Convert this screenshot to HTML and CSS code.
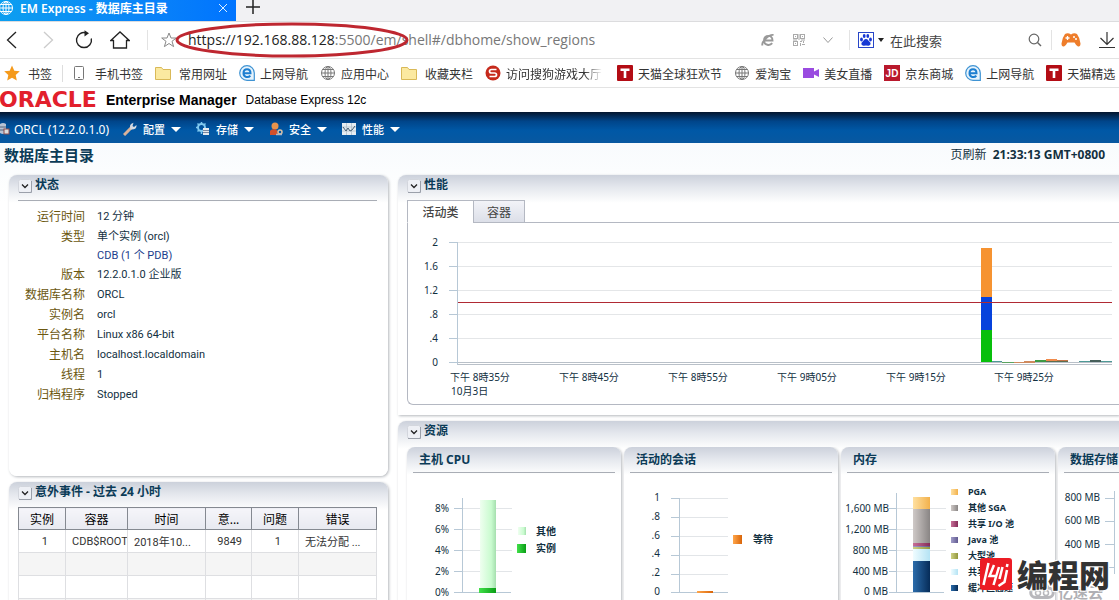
FILE: index.html
```html
<!DOCTYPE html>
<html lang="zh-CN">
<head>
<meta charset="utf-8">
<title>EM Express - 数据库主目录</title>
<link rel="stylesheet" href="styles.css">
</head>
<body>
<svg class="defs" width="0" height="0" aria-hidden="true">
  <defs>
    <symbol id="globe" viewBox="0 0 16 16"><g fill="none" stroke="currentColor"><circle cx="8" cy="8" r="6.5"/><ellipse cx="8" cy="8" rx="3" ry="6.5"/><path d="M8 1.500V14.500M1.500 8H14.500M2.500 4.500H13.500M2.500 11.500H13.500"/></g></symbol>
    <symbol id="folder" viewBox="0 0 16 16"><path d="M.5 2.500H6.500L8 4.500H15.500V14.500H.5Z" fill="#fbe9a0" stroke="#d9b958"/></symbol>
    <symbol id="eball" viewBox="0 0 16 16"><path d="M8 .7A7.300 7.300 0 1 0 8 15.300H15.300V8A7.300 7.300 0 0 0 8 .7Z" fill="#e6f3fc" stroke="#3f93d3" stroke-width="1.200"/><path d="M4.500 8.200H11.500C11.500 2.800 4.500 2.800 4.500 8.200C4.500 12.500 9.500 13 11.300 10.600" fill="none" stroke="#1c7ed0" stroke-width="2"/></symbol>
    <symbol id="tmall" viewBox="0 0 16 16"><rect width="16" height="16" rx="1" fill="#b30c14"/><path d="M3.500 3.500H12.500V6H9.300V13H6.700V6H3.500Z" fill="#fff"/></symbol>
    <symbol id="collapse" viewBox="0 0 14 14"><rect x=".5" y=".5" width="13" height="13" rx="2" fill="#eef0f5" stroke="#d3d6dd"/><path d="M1 13.500H13.500V2" fill="none" stroke="#9ba0aa"/><path d="M4 5.500L7 8.500L10 5.500" fill="none" stroke="#222" stroke-width="1.300"/></symbol>
    <linearGradient id="pale"><stop offset="0" stop-color="#effff0"/><stop offset=".7" stop-color="#c9fbcf"/><stop offset="1" stop-color="#a5dfae"/></linearGradient>
    <linearGradient id="green"><stop offset="0" stop-color="#41e04a"/><stop offset="1" stop-color="#0a9e16"/></linearGradient>
    <linearGradient id="orange"><stop offset="0" stop-color="#ffa64a"/><stop offset="1" stop-color="#d9650a"/></linearGradient>
    <linearGradient id="pga"><stop offset="0" stop-color="#ffe0a0"/><stop offset="1" stop-color="#f2b14c"/></linearGradient>
    <linearGradient id="sga"><stop offset="0" stop-color="#cfc9c7"/><stop offset="1" stop-color="#898584"/></linearGradient>
    <linearGradient id="io"><stop offset="0" stop-color="#c77098"/><stop offset="1" stop-color="#852c58"/></linearGradient>
    <linearGradient id="java"><stop offset="0" stop-color="#a09cc8"/><stop offset="1" stop-color="#615a90"/></linearGradient>
    <linearGradient id="large"><stop offset="0" stop-color="#ced184"/><stop offset="1" stop-color="#92963c"/></linearGradient>
    <linearGradient id="shared"><stop offset="0" stop-color="#effcff"/><stop offset="1" stop-color="#b4e3f4"/></linearGradient>
    <linearGradient id="buffer"><stop offset="0" stop-color="#2b6cab"/><stop offset="1" stop-color="#062c58"/></linearGradient>
  </defs>
</svg>

<div class="tabstrip">
  <div class="browser-tab">
    <svg class="i16" aria-hidden="true"><use href="#globe"/></svg>
    <span class="browser-tab-title">EM Express - 数据库主目录</span>
    <button class="bare" aria-label="关闭"><svg width="10" height="10"><path d="M1 1L9 9M9 1L1 9" stroke="#dcefff" fill="none"/></svg></button>
  </div>
  <button class="bare new-tab" aria-label="新标签页"><svg width="14" height="14"><path d="M7 0V14M0 7H14" stroke="#222" stroke-width="1.500"/></svg></button>
</div>

<div class="toolbar">
  <div class="nav-buttons">
    <button class="bare" aria-label="后退"><svg width="20" height="20"><path d="M14 2L5.500 10L14 18" fill="none" stroke="#222" stroke-width="1.300"/></svg></button>
    <button class="bare" aria-label="前进"><svg width="20" height="20"><path d="M6 2L14.500 10L6 18" fill="none" stroke="#ccc" stroke-width="1.300"/></svg></button>
    <button class="bare" aria-label="刷新"><svg width="20" height="20"><path d="M12.500 3A7.500 7.500 0 1 0 17.300 8.500" fill="none" stroke="#222" stroke-width="1.400"/><path d="M10.500 .2L15 3.300L10.500 6.500Z" fill="#222"/></svg></button>
    <button class="bare" aria-label="主页"><svg width="20" height="20"><path d="M.8 10.500L10 2L19.200 10.500H16.500V18H3.500V10.500Z" fill="none" stroke="#222" stroke-width="1.300"/></svg></button>
  </div>
  <div class="address">
    <svg width="16" height="16" aria-hidden="true"><path d="M8 1L10 6H15.300L11 9.300L12.600 14.600L8 11.500L3.400 14.600L5 9.300L.7 6H6Z" fill="none" stroke="#888"/></svg>
    <div class="url" role="textbox" contenteditable="true" spellcheck="false" aria-label="地址">https://192.168.88.128<span class="url-rest">:5500/em/shell#/dbhome/show_regions</span></div>
    <svg class="ring" viewBox="0 0 236 36" aria-hidden="true"><ellipse cx="118" cy="18" rx="115" ry="16" fill="none" stroke="#be2730" stroke-width="3"/></svg>
    <div class="address-tools">
      <button class="bare" aria-label="兼容模式"><svg width="14" height="14"><path d="M3 7.500H11.500C11.500 1.300 3 1.300 3 7.500C3 12.500 9 13 11.200 10.200M1.500 12.500C0 9 8 1 12.500 2" fill="none" stroke="#999" stroke-width="1.900"/></svg></button>
      <button class="bare" aria-label="二维码"><svg width="12" height="12" fill="none" stroke="#aaa"><rect x=".5" y=".5" width="4" height="4"/><rect x="7.500" y=".5" width="4" height="4"/><rect x=".5" y="7.500" width="4" height="4"/><path d="M2 2.500H3M9 2.500H10M2 9.500H3M7 7.500H9M10.500 7V9M7.500 9V12M9 10.500H12M0 6H4M6 0V6M8 6H12"/></svg></button>
      <button class="bare" aria-label="展开"><svg width="10" height="10"><path d="M.5 2.500L5 7.500L9.500 2.500" fill="none" stroke="#999"/></svg></button>
    </div>
  </div>
  <div class="search">
    <svg width="16" height="16" aria-hidden="true"><rect x=".5" y=".5" width="15" height="15" fill="#fff" stroke="#2846c8"/><g fill="#1738d4"><ellipse cx="3.500" cy="7.500" rx="1.400" ry="1.900"/><ellipse cx="6.200" cy="4" rx="1.400" ry="2"/><ellipse cx="9.800" cy="4" rx="1.400" ry="2"/><ellipse cx="12.500" cy="7.500" rx="1.400" ry="1.900"/><path d="M8 7C6 7 5.500 9 4 10.300C2.600 12 4 14 5.800 13.700Q8 13.200 10.200 13.700C12 14 13.400 12 12 10.300C10.500 9 10 7 8 7Z"/></g></svg>
    <svg width="6" height="4" aria-hidden="true"><path d="M0 0H6L3 4Z" fill="#222"/></svg>
    <input class="search-input" type="text" aria-label="搜索" placeholder="在此搜索">
    <button class="bare" aria-label="搜索"><svg width="14" height="14"><circle cx="6" cy="6" r="4.800" fill="none" stroke="#666" stroke-width="1.200"/><path d="M9.500 9.500L13 13" stroke="#666" stroke-width="1.400"/></svg></button>
  </div>
  <div class="extras">
    <button class="bare" aria-label="游戏"><svg width="20" height="16"><path d="M4 2Q7 .5 10 2.500Q13 .5 16 2Q19 6 19.500 11.500Q19.500 15 17 14.500Q15 13.500 13.500 10.500H6.500Q5 13.500 3 14.500Q.5 15 .5 11.500Q1 6 4 2Z" fill="#ee7d2b"/><path d="M6.500 4V8M4.500 6H8.500" stroke="#fff" stroke-width="1.300"/><circle cx="13" cy="5" r="1" fill="#fff"/><circle cx="15" cy="7" r="1" fill="#fff"/></svg></button>
    <button class="bare" aria-label="下载"><svg width="18" height="18"><path d="M9 1V13M2.500 7L9 13.500L15.500 7M1 16.500H17" fill="none" stroke="#333" stroke-width="1.200"/></svg></button>
  </div>
</div>

<nav class="bookmarks">
  <a class="wide first" href="#"><svg class="i16"><path d="M8 .5L10.300 5.700L15.800 6.300L11.700 10L12.800 15.500L8 12.700L3.200 15.500L4.300 10L.2 6.300L5.700 5.700Z" fill="#f59a1b"/></svg>书签</a>
  <a class="wide" href="#"><svg class="i16"><rect x="3.500" y="1.500" width="9" height="13" rx="1" fill="#fff" stroke="#777"/><path d="M7 12.500H9" stroke="#777"/></svg>手机书签</a>
  <a class="wide" href="#"><svg class="i16"><use href="#folder"/></svg>常用网址</a>
  <a href="#"><svg class="i16"><use href="#eball"/></svg>上网导航</a>
  <a href="#"><svg class="i16"><use href="#globe"/></svg>应用中心</a>
  <a class="wide" href="#"><svg class="i16"><use href="#folder"/></svg>收藏夹栏</a>
  <a class="faded" href="#"><svg class="i16"><circle cx="8" cy="8" r="7.500" fill="#c62a1c"/><path d="M11.500 4.500H6.500Q4.500 4.500 4.500 6.300Q4.500 8 6.500 8H9.500Q11.500 8 11.500 9.700Q11.500 11.500 9.500 11.500H4.500" fill="none" stroke="#fff" stroke-width="1.700"/></svg>访问搜狗游戏大厅</a>
  <a href="#"><svg class="i16"><use href="#tmall"/></svg>天猫全球狂欢节</a>
  <a href="#"><svg class="i16"><use href="#globe"/></svg>爱淘宝</a>
  <a href="#"><svg class="i16"><path d="M0 3H11V6.500L16 4V12L11 9.500V13H0Z" fill="#9a4be0"/></svg>美女直播</a>
  <a href="#"><svg class="i16"><rect width="16" height="16" fill="#b9192c"/><text class="jd" x="8" y="12" text-anchor="middle">JD</text></svg>京东商城</a>
  <a href="#"><svg class="i16"><use href="#eball"/></svg>上网导航</a>
  <a href="#"><svg class="i16"><use href="#tmall"/></svg>天猫精选</a>
</nav>

<header class="brand">
  <span class="oracle">ORACLE</span>
  <span class="product">Enterprise Manager</span>
  <span class="edition">Database Express 12c</span>
</header>

<nav class="menubar">
  <span class="instance"><svg width="10" height="14" aria-hidden="true"><path d="M0 2Q3 0 6 2V11Q3 13 0 11Z" fill="#b8c3d4"/><path d="M0 5H6M0 8H6" stroke="#55627a"/><rect x="4" y="7" width="5" height="5" fill="#ddd" stroke="#8c4b4b"/></svg>ORCL (12.2.0.1.0)</span>
  <button class="menu"><svg class="i14"><path d="M1 13L8 6" stroke="#d9b29a" stroke-width="3"/><path d="M7.500 7.500Q5.500 2 10.500 .7L9.500 4L11 5L13.500 3Q14 8 7.500 7.500Z" fill="#d5dae2"/></svg>配置<i class="caret"></i></button>
  <button class="menu"><svg class="i14"><circle cx="5.500" cy="5.500" r="3.500" fill="none" stroke="#7fc8ef" stroke-width="2"/><path d="M5.500 0V2M5.500 9V12M0 5.500H2M1.500 1.500L3 3M9.500 1.500L8 3M1.500 9.500L3 8" stroke="#7fc8ef" stroke-width="1.500"/><rect x="7" y="6" width="6" height="7" fill="#e5e9ee"/><path d="M7 8.500H13M7 10.500H13" stroke="#7888a0"/></svg>存储<i class="caret"></i></button>
  <button class="menu"><svg class="i14"><circle cx="6" cy="4" r="3.500" fill="#e8934c"/><path d="M1 13V9Q2 7 6 7Q9 8 9 13Z" fill="#d1502c"/><circle cx="11" cy="10" r="2" fill="none" stroke="#d8c0a4" stroke-width="1.500"/><path d="M7 12.500H13" stroke="#aeb7c7" stroke-width="1.500"/></svg>安全<i class="caret"></i></button>
  <button class="menu"><svg class="i14"><rect x="0" y="1" width="14" height="12" fill="#e6edf2"/><path d="M0 5H14M0 9H14M4.500 1V13M9.500 1V13" stroke="#aabac5" stroke-width=".7"/><path d="M1 5L4 9L6 6L8 9L10 8L13 4" fill="none" stroke="#435c70"/></svg>性能<i class="caret"></i></button>
</nav>

<main class="page">
  <div class="page-head">
    <h1>数据库主目录</h1>
    <p class="refresh">页刷新 <b>21:33:13 GMT+0800</b></p>
  </div>

  <div class="columns">
    <div class="left">
      <section class="card status">
        <h2 class="card-head"><button class="bare" aria-label="折叠"><svg class="i14"><use href="#collapse"/></svg></button>状态</h2>
        <dl>
          <dt>运行时间</dt><dd>12 分钟</dd>
          <dt>类型</dt><dd>单个实例 (orcl)<a href="#">CDB (1 个 PDB)</a></dd>
          <dt>版本</dt><dd>12.2.0.1.0 企业版</dd>
          <dt>数据库名称</dt><dd>ORCL</dd>
          <dt>实例名</dt><dd>orcl</dd>
          <dt>平台名称</dt><dd>Linux x86 64-bit</dd>
          <dt>主机名</dt><dd>localhost.localdomain</dd>
          <dt>线程</dt><dd>1</dd>
          <dt>归档程序</dt><dd>Stopped</dd>
        </dl>
      </section>
      <section class="card incidents">
        <h2 class="card-head"><button class="bare" aria-label="折叠"><svg class="i14"><use href="#collapse"/></svg></button>意外事件 - 过去 24 小时</h2>
        <table>
          <colgroup><col class="c-inst"><col class="c-cont"><col class="c-time"><col class="c-inc"><col class="c-prob"><col></colgroup>
          <thead><tr><th>实例</th><th>容器</th><th>时间</th><th>意...</th><th>问题</th><th>错误</th></tr></thead>
          <tbody>
            <tr><td class="num">1</td><td>CDB$ROOT</td><td>2018年10...</td><td class="num">9849</td><td class="num">1</td><td>无法分配 ...</td></tr>
            <tr><td></td><td></td><td></td><td></td><td></td><td></td></tr>
            <tr><td></td><td></td><td></td><td></td><td></td><td></td></tr>
            <tr><td></td><td></td><td></td><td></td><td></td><td></td></tr>
          </tbody>
        </table>
      </section>
    </div>

    <div class="right">
      <section class="card performance">
        <h2 class="card-head"><button class="bare" aria-label="折叠"><svg class="i14"><use href="#collapse"/></svg></button>性能</h2>
        <div class="tabs" role="tablist">
          <button class="tab active" role="tab" aria-selected="true">活动类</button>
          <button class="tab" role="tab" aria-selected="false">容器</button>
        </div>
        <div class="tab-panel">
          <svg class="chart" viewBox="0 0 711 181">
            <path d="M50 19.500H704M50 43.500H704M50 67.500H704M50 91.500H704M50 115.500H704" stroke="#e4e6e8"/>
            <path d="M41 19.500H50M41 43.500H50M41 67.500H50M41 91.500H50M41 115.500H50M41 139.500H50M49.500 19V142" stroke="#b7c8d6" fill="none"/>
            <path d="M50 139.500H704M50 141.500H704" stroke="#b9c0c8"/>
            <rect x="573" y="25" width="11" height="49" fill="#f69331"/>
            <rect x="573" y="74" width="11" height="33" fill="#0742dc"/>
            <rect x="573" y="107" width="11" height="32" fill="#08bf0c"/>
            <path d="M584 138.500H594M671 138.500H682M693 138.500H704" stroke="#4e9a96"/>
            <path d="M594 139.500H606M627 138.500H638" stroke="#5aa35e"/>
            <path d="M606 139.500H627M616 138.500H627" stroke="#cf8a5e"/>
            <rect x="627" y="137" width="11" height="2" fill="#3d9944"/>
            <rect x="638" y="136" width="11" height="2" fill="#f08a4b"/>
            <rect x="638" y="138" width="22" height="1" fill="#5c6e50"/>
            <rect x="649" y="137" width="11" height="1" fill="#c47448"/>
            <rect x="682" y="137" width="11" height="2" fill="#465f5a"/>
            <path d="M50 79.500H704" stroke="#b02a34"/>
            <g class="axis" text-anchor="end"><text x="30" y="23">2</text><text x="30" y="47">1.6</text><text x="30" y="71">1.2</text><text x="30" y="95">.8</text><text x="30" y="119">.4</text><text x="30" y="143">0</text></g>
            <g class="axis" text-anchor="middle"><text x="72" y="158">下午 8時35分</text><text x="181" y="158">下午 8時45分</text><text x="290" y="158">下午 8時55分</text><text x="399" y="158">下午 9時05分</text><text x="508" y="158">下午 9時15分</text><text x="616" y="158">下午 9時25分</text></g>
            <text class="axis" x="43" y="172">10月3日</text>
          </svg>
        </div>
      </section>

      <section class="card resources">
        <h2 class="card-head"><button class="bare" aria-label="折叠"><svg class="i14"><use href="#collapse"/></svg></button>资源</h2>
        <div class="tiles">
          <article class="card tile">
            <h3>主机 CPU</h3>
            <svg width="214" height="150">
              <path d="M55 35.500H105M55 56.500H105M55 77.500H105M55 98.500H105" stroke="#e2e5e8"/>
              <path d="M47 35.500H55M47 56.500H55M47 77.500H55M47 98.500H55M47 119.500H104M55.500 25V119" stroke="#b7c8d6"/>
              <rect x="73" y="27" width="16" height="88" fill="url(#pale)"/><rect x="72" y="115" width="17" height="5" fill="url(#green)"/>
              <rect x="111" y="54" width="8" height="8" fill="url(#pale)"/><rect x="110" y="71" width="9" height="9" fill="url(#green)"/>
              <g class="axis" text-anchor="end"><text x="42" y="39">8%</text><text x="42" y="60">6%</text><text x="42" y="81">4%</text><text x="42" y="102">2%</text><text x="42" y="123">0%</text></g>
              <g class="legend"><text x="129" y="62">其他</text><text x="129" y="79">实例</text></g>
            </svg>
          </article>
          <article class="card tile">
            <h3>活动的会话</h3>
            <svg width="214" height="150">
              <path d="M55 25.500H104M55 44.500H104M55 63.500H104M55 82.500H104M55 101.500H104" stroke="#e2e5e8"/>
              <path d="M47 25.500H55M47 44.500H55M47 63.500H55M47 82.500H55M47 101.500H55M47 119.500H104M55.500 25V119" stroke="#b7c8d6"/>
              <rect x="73" y="118" width="16" height="2" fill="url(#orange)"/>
              <rect x="109" y="62" width="9" height="9" fill="url(#orange)"/>
              <g class="axis" text-anchor="end"><text x="36" y="28">1</text><text x="36" y="47">.8</text><text x="36" y="66">.6</text><text x="36" y="84">.4</text><text x="36" y="103">.2</text><text x="36" y="122">0</text></g>
              <text class="legend" x="129" y="70">等待</text>
            </svg>
          </article>
          <article class="card tile">
            <h3>内存</h3>
            <svg width="214" height="150">
              <path d="M55 35.500H105M55 56.500H105M55 77.500H105M55 98.500H105" stroke="#e2e5e8"/>
              <path d="M48 35.500H55M48 56.500H55M48 77.500H55M48 98.500H55M48 119.500H103M55.500 20V119" stroke="#b7c8d6"/>
              <rect x="72" y="24" width="17" height="12" fill="url(#pga)"/>
              <rect x="72" y="36" width="17" height="34" fill="url(#sga)"/>
              <rect x="72" y="70" width="17" height="3" fill="url(#io)"/>
              <rect x="72" y="73" width="17" height="1" fill="url(#java)"/>
              <rect x="72" y="74" width="17" height="2" fill="url(#large)"/>
              <rect x="72" y="76" width="17" height="12" fill="url(#shared)"/>
              <rect x="72" y="88" width="17" height="31" fill="url(#buffer)"/>
              <g class="axis" text-anchor="end"><text x="48" y="39">1,600 MB</text><text x="48" y="60">1,200 MB</text><text x="47" y="81">800 MB</text><text x="47" y="102">400 MB</text><text x="47" y="122">0 MB</text></g>
              <rect x="110" y="16" width="7" height="6" fill="url(#pga)"/><rect x="110" y="32" width="7" height="6" fill="url(#sga)"/><rect x="110" y="48" width="7" height="6" fill="url(#io)"/><rect x="110" y="64" width="7" height="6" fill="url(#java)"/><rect x="110" y="80" width="7" height="6" fill="url(#large)"/><rect x="110" y="96" width="7" height="6" fill="url(#shared)"/><rect x="110" y="112" width="7" height="6" fill="url(#buffer)"/>
              <g class="legend small"><text x="127" y="22">PGA</text><text x="127" y="38">其他 SGA</text><text x="127" y="54">共享 I/O 池</text><text x="127" y="70">Java 池</text><text x="127" y="86">大型池</text><text x="127" y="102">共享池</text><text x="127" y="118">缓冲区高速</text></g>
            </svg>
          </article>
          <article class="card tile">
            <h3>数据存储</h3>
            <svg width="214" height="150">
              <path d="M47 25.500H56M47 48.500H56M47 71.500H56M47 94.500H56M56.500 18V101" stroke="#b7c8d6"/>
              <g class="axis" text-anchor="end"><text x="42" y="28">800 MB</text><text x="42" y="51">600 MB</text><text x="42" y="75">400 MB</text></g>
            </svg>
          </article>
        </div>
      </section>
    </div>
  </div>
</main>

<div class="cloud-mark" aria-hidden="true"><svg width="26" height="18"><path d="M7 14.500C0 14.500 0 5 7 5C10 -1 18 0 19 5C26 5 26 14.500 19 14.500Z" fill="none" stroke="#b8b8bc" stroke-width="3"/><circle cx="9" cy="10" r="2.500" fill="none" stroke="#b8b8bc" stroke-width="1.500"/><circle cx="17" cy="10" r="2.500" fill="none" stroke="#b8b8bc" stroke-width="1.500"/></svg>亿速云</div>
<div class="site-mark"><svg width="34" height="34" viewBox="0 0 34 34" aria-hidden="true"><rect x="1" y="1" width="32" height="32" rx="3" fill="#ec1c24"/><path d="M9.500 6L4.500 28M15 8L10.500 19H17M20 10L14.500 28M23.500 10L20.500 22M28 13L25.500 25L19.500 29M28.500 7L27.800 10" fill="none" stroke="#fff" stroke-width="2.500"/></svg>编程网</div>
</body>
</html>
```
FILE: styles.css
```css
* { box-sizing: border-box; }

html, body { height: 100%; }

body {
  margin: 0;
  display: flex;
  flex-direction: column;
  overflow: hidden;
  position: relative;
  background: #fff;
  color: #12303f;
  font-family: "Noto Sans", "Noto Sans CJK SC", sans-serif;
  font-size: 11px;
}

a { color: inherit; text-decoration: none; }
svg { display: block; flex: none; }
.defs { position: absolute; }
.i16 { width: 16px; height: 16px; }
.i14 { width: 14px; height: 14px; }

.bare {
  display: flex;
  padding: 0;
  border: 0;
  background: none;
}

/* Browser chrome */
.tabstrip {
  display: flex;
  flex: none;
  height: 22px;
  background: #f1f1f3;
  border-bottom: 1px solid #dcdcde;
}

.browser-tab {
  display: flex;
  align-items: center;
  gap: 6px;
  width: 238px;
  padding: 0 8px 6px 0;
  margin-left: -2px;
  color: #fff;
  background: linear-gradient(90deg, #0c9ff0, #0a84f8 60%, #0074ff);
}

.browser-tab-title {
  flex: 1;
  font-size: 12px;
  font-weight: 600;
  white-space: nowrap;
}

.new-tab { padding-left: 10px; }

.toolbar {
  display: flex;
  flex: none;
  align-items: center;
  height: 37px;
  background: #fff;
  border-bottom: 1px solid #e3e3e3;
}

.nav-buttons {
  display: flex;
  gap: 16px;
  width: 148px;
  padding-left: 2px;
  border-right: 1px solid #e3e3e3;
}

.address {
  position: relative;
  display: flex;
  flex: 1;
  align-items: center;
  gap: 11px;
  height: 28px;
  padding-left: 13px;
}

.url {
  flex: 1;
  font-size: 14px;
  line-height: 28px;
  font-family: "Open Sans", sans-serif;
  color: #222;
  white-space: nowrap;
}

.url-rest { color: #777; }

.ring {
  position: absolute;
  left: 26px;
  top: -4px;
  width: 236px;
  height: 36px;
}

.address-tools {
  display: flex;
  align-items: center;
  gap: 18px;
  padding-right: 16px;
}

.search {
  display: flex;
  align-items: center;
  gap: 4px;
  width: 203px;
  height: 20px;
  padding: 0 9px 0 8px;
  border: 1px solid #e3e3e3;
  border-width: 0 1px;
}

.search-input {
  flex: 1;
  min-width: 0;
  padding: 0 2px;
  border: 0;
  outline: 0;
  font-family: "Noto Sans CJK SC", sans-serif;
  font-size: 13px;
  color: #333;
}

.search-input::placeholder { color: #444; }

.extras {
  display: flex;
  align-items: center;
  gap: 17px;
  padding: 0 3px 0 9px;
}

.bookmarks {
  display: flex;
  flex: none;
  align-items: center;
  gap: 12px;
  height: 29px;
  padding-left: 4px;
  border-bottom: 1px solid #e3e3e3;
  color: #333;
  font-family: "Noto Sans CJK SC", sans-serif;
  font-size: 12px;
}

.bookmarks a {
  display: flex;
  flex: none;
  align-items: center;
  gap: 5px;
  white-space: nowrap;
}

.bookmarks .wide { gap: 8px; }

.bookmarks .first {
  padding-right: 10px;
  margin-right: -4px;
  border-right: 1px solid #ddd;
}

.bookmarks .i16 { color: #777; }

.bookmarks .faded {
  margin-right: 3px;
  mask-image: linear-gradient(90deg, #000 85%, transparent);
}

.jd {
  fill: #fff;
  font: bold 10px "Liberation Sans", sans-serif;
}

/* Product header */
.brand {
  display: flex;
  flex: none;
  align-items: center;
  gap: 9px;
  height: 24px;
  font-family: "Liberation Sans", sans-serif;
  font-size: 12px;
  color: #000;
}

.oracle {
  margin-left: -1px;
  font: bold 22px/20px "DejaVu Sans", sans-serif;
  color: #e2202c;
}

.product { font-size: 14px; font-weight: bold; }

.menubar {
  display: flex;
  flex: none;
  align-items: center;
  gap: 14px;
  height: 31px;
  padding-top: 3px;
  color: #fff;
  background: linear-gradient(#04152e, #00458a 30%, #0058a6 60%, #0858a0);
}

.instance {
  display: flex;
  align-items: center;
  gap: 4px;
  font-size: 12px;
  white-space: nowrap;
}

.menu {
  display: flex;
  align-items: center;
  gap: 6px;
  width: 59px;
  padding: 0;
  border: 0;
  background: none;
  color: #fff;
  font: 500 11px "Noto Sans CJK SC", sans-serif;
  white-space: nowrap;
}

.caret {
  border: 5px solid transparent;
  border-top-color: #fff;
  border-bottom: 0;
}

/* Page */
.page {
  flex: 1;
  min-height: 0;
  overflow: hidden;
  background: linear-gradient(#f8fbfd, #fff 60px);
}

.page-head {
  display: flex;
  justify-content: space-between;
  align-items: center;
  height: 22px;
  padding: 0 14px 0 4px;
  margin-bottom: 10px;
}

h1, h2, h3, p, dl, dd { margin: 0; }

h1, h2, h3 {
  color: #0b3b57;
  font-weight: bold;
}

h1 { font-size: 15px; }
.refresh { font-size: 12px; }
.refresh b { margin-left: 3px; font-size: 12px; }

.columns {
  display: flex;
  gap: 10px;
  padding-left: 9px;
}

.left {
  display: flex;
  flex: 0 0 379px;
  flex-direction: column;
  gap: 6px;
}

.right {
  display: flex;
  flex: 1;
  flex-direction: column;
  gap: 6px;
  min-width: 0;
}

.card {
  border-radius: 8px;
  background: linear-gradient(#ccd1db, #e4e7ed 12px, #fff 28px);
  box-shadow: 1px 1px 3px #b4b7bc;
}

.card-head {
  display: flex;
  align-items: center;
  gap: 3px;
  height: 20px;
  padding: 0 0 2px 9px;
  font-size: 12px;
}

.card-head .bare { padding-top: 3px; }

.status { min-height: 301px; }

dl {
  display: grid;
  grid-template-columns: 67px 1fr;
  column-gap: 12px;
  margin: 5px 11px 0 9px;
  padding-top: 6px;
  border-top: 1px solid #a9adb5;
  line-height: 20px;
}

dt {
  text-align: right;
  font-size: 12px;
  color: #6b5710;
}

dd, td { font-family: Roboto, "Noto Sans CJK SC", sans-serif; }

dd a {
  display: block;
  line-height: 18px;
  color: #1b3d8c;
}

.incidents { padding-bottom: 12px; }

table {
  width: 359px;
  margin: 5px 0 0 9px;
  table-layout: fixed;
  border-collapse: collapse;
  border: 1px solid #858991;
}

.c-inst { width: 47px; }
.c-cont { width: 62px; }
.c-time { width: 78px; }
.c-inc { width: 46px; }
.c-prob { width: 47px; }

th {
  height: 22px;
  padding: 0;
  border: 1px solid #858991;
  background: linear-gradient(#f5f5fa, #e8e9f0);
  font-size: 12px;
  font-weight: normal;
  color: #000;
}

td {
  height: 23px;
  padding: 0 0 0 6px;
  overflow: hidden;
  border: 1px solid #dedfe2;
  background: #fff;
  color: #333;
  white-space: nowrap;
}

tr:nth-child(even) td { background: #f5f5f5; }
td.num { padding: 0 17px 0 0; text-align: right; }
td.num:nth-child(4) { padding-right: 9px; }

.performance, .resources { border-radius: 8px 0 0 0; }
.performance { padding-bottom: 10px; }

.tabs {
  display: flex;
  margin: 5px 0 -1px 9px;
  position: relative;
}

.tab {
  height: 23px;
  width: 52px;
  padding: 0;
  border: 1px solid #b4b8c2;
  background: linear-gradient(#f2f3f8, #dcdfe8);
  color: #444;
  font: 12px "Noto Sans CJK SC", sans-serif;
}

.tab.active {
  width: 66px;
  border-right: 0;
  border-bottom-color: #fff;
  background: #fff;
  font-weight: 500;
}

.tab-panel {
  margin-left: 9px;
  border: 1px solid #b4b8c2;
  border-right: 0;
  border-radius: 0 0 0 6px;
}

.chart { width: 100%; height: auto; }

.axis {
  font-size: 10px;
  fill: #12303f;
}

.legend {
  font-size: 10px;
  font-weight: bold;
  fill: #12303f;
}

.legend.small { font-size: 9px; }

.tiles {
  display: flex;
  gap: 3px;
  margin-top: 6px;
  padding-left: 9px;
  overflow: hidden;
}

.tile { flex: 0 0 214px; }

h3 {
  height: 26px;
  margin: 0 6px;
  padding-left: 6px;
  border-bottom: 1px solid #a9adb5;
  font-size: 12px;
  line-height: 25px;
  white-space: nowrap;
}

/* Watermarks laid over the page corner */
.cloud-mark {
  position: absolute;
  right: 16px;
  bottom: -2px;
  display: flex;
  align-items: center;
  gap: 3px;
  color: #b0b0b4;
  font: bold 15px/20px "Noto Sans CJK SC", sans-serif;
}

.site-mark {
  position: absolute;
  right: 9px;
  bottom: 9px;
  display: flex;
  align-items: center;
  gap: 4px;
  color: #333;
  font: 900 31px/34px "Noto Sans CJK SC", sans-serif;
  text-shadow: 1px 1px #fff, -1px -1px #fff, 1px -1px #fff, -1px 1px #fff;
}
```
